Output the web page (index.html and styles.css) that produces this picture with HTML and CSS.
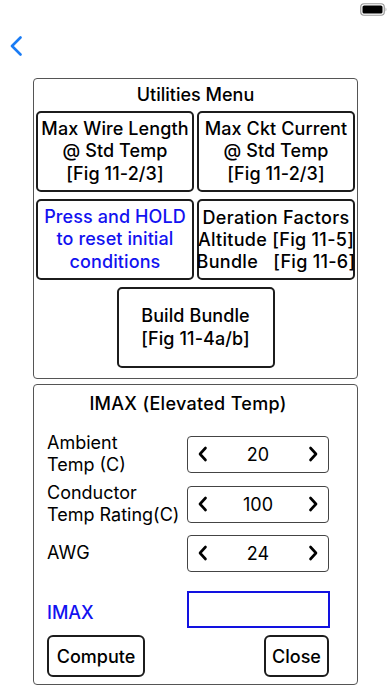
FILE: index.html
```html
<!DOCTYPE html>
<html>
<head>
<meta charset="utf-8">
<link rel="stylesheet" href="styles.css">
</head>
<body>
<div class="status">
  <svg class="battery" width="27" height="13" viewBox="0 0 27 13">
    <rect x="0.75" y="0.75" width="23.5" height="11.5" rx="3.2" fill="none" stroke="#999" stroke-width="1.2"/>
    <rect x="2.5" y="2.5" width="20" height="8" rx="1.6" fill="#000"/>
    <path d="M25.6 4.6 C26.6 5 26.6 8 25.6 8.4 Z" fill="#999"/>
  </svg>
</div>
<div class="nav">
  <svg class="back" width="14" height="20" viewBox="0 0 14 20">
    <path d="M11.5 1.5 L3 10 L11.5 18.5" fill="none" stroke="#1a7cf5" stroke-width="2.6" stroke-linecap="round" stroke-linejoin="round"/>
  </svg>
</div>

<section class="panel menu">
  <h2 class="panel-title">Utilities Menu</h2>
  <div class="menu-grid">
    <div class="btn">Max Wire Length<br>@ Std Temp<br>[Fig 11-2/3]</div>
    <div class="btn">Max Ckt Current<br>@ Std Temp<br>[Fig 11-2/3]</div>
    <div class="btn blue">Press and HOLD<br>to reset initial<br>conditions</div>
    <div class="btn pre">Deration Factors
Altitude [Fig 11-5]
Bundle   [Fig 11-6]</div>
    <div class="btn bundle">Build Bundle<br>[Fig 11-4a/b]</div>
  </div>
</section>

<section class="panel imax">
  <h2 class="panel-title">IMAX (Elevated Temp)</h2>
  <div class="row r1">
    <div class="label">Ambient<br>Temp (C)</div>
    <div class="stepper">
      <svg class="chev" width="10" height="16" viewBox="0 0 10 16"><path d="M7.5 2 L2 8 L7.5 14" fill="none" stroke="#000" stroke-width="2.6" stroke-linecap="round" stroke-linejoin="round"/></svg>
      <span class="val">20</span>
      <svg class="chev" width="10" height="16" viewBox="0 0 10 16"><path d="M2.5 2 L8 8 L2.5 14" fill="none" stroke="#000" stroke-width="2.6" stroke-linecap="round" stroke-linejoin="round"/></svg>
    </div>
  </div>
  <div class="row r2">
    <div class="label">Conductor<br>Temp Rating(C)</div>
    <div class="stepper">
      <svg class="chev" width="10" height="16" viewBox="0 0 10 16"><path d="M7.5 2 L2 8 L7.5 14" fill="none" stroke="#000" stroke-width="2.6" stroke-linecap="round" stroke-linejoin="round"/></svg>
      <span class="val">100</span>
      <svg class="chev" width="10" height="16" viewBox="0 0 10 16"><path d="M2.5 2 L8 8 L2.5 14" fill="none" stroke="#000" stroke-width="2.6" stroke-linecap="round" stroke-linejoin="round"/></svg>
    </div>
  </div>
  <div class="row r3">
    <div class="label">AWG</div>
    <div class="stepper">
      <svg class="chev" width="10" height="16" viewBox="0 0 10 16"><path d="M7.5 2 L2 8 L7.5 14" fill="none" stroke="#000" stroke-width="2.6" stroke-linecap="round" stroke-linejoin="round"/></svg>
      <span class="val">24</span>
      <svg class="chev" width="10" height="16" viewBox="0 0 10 16"><path d="M2.5 2 L8 8 L2.5 14" fill="none" stroke="#000" stroke-width="2.6" stroke-linecap="round" stroke-linejoin="round"/></svg>
    </div>
  </div>
  <div class="row r4">
    <div class="label blue-label">IMAX</div>
    <div class="result"></div>
  </div>
  <div class="actions">
    <div class="act compute">Compute</div>
    <div class="act close">Close</div>
  </div>
</section>
</body>
</html>
```
FILE: styles.css
```css
* { box-sizing: border-box; }
html, body { margin: 0; padding: 0; background: #fff; }
body {
  width: 392px;
  height: 696px;
  font-family: Inter, "Liberation Sans", sans-serif;
  color: #000;
  overflow: hidden;
}
.status {
  height: 28px;
  display: flex;
  justify-content: flex-end;
  padding: 3px 5px 0 0;
}
.battery { display: block; }
.nav {
  height: 50px;
  padding: 8px 0 0 9px;
}
.back { display: block; }

.panel {
  margin-left: 33px;
  width: 325px;
  border: 1px solid #555;
  border-radius: 4px;
}
.panel-title {
  margin: 0;
  font-size: 18px;
  font-weight: 500;
  line-height: 22px;
  text-align: center;
}
.menu { height: 301px; padding: 5px 2px 0 2px; }
.menu .panel-title { margin-bottom: 5px; }
.menu-grid {
  display: grid;
  grid-template-columns: 158px 158px;
  grid-auto-rows: 81px;
  gap: 7px 3px;
  justify-content: center;
}
.btn {
  border: 2px solid #1c1c1c;
  border-radius: 5px;
  display: flex;
  align-items: center;
  justify-content: center;
  text-align: center;
  font-size: 18px;
  font-weight: 500;
  line-height: 22.5px;
  letter-spacing: 0.1px;
}
.btn.blue { color: #1212f0; }
.btn.pre { white-space: pre; line-height: 22px; letter-spacing: 0.3px; }
.btn.bundle { grid-column: 1 / span 2; width: 158px; justify-self: center; }

.imax {
  margin-top: 5px;
  height: 301px;
  padding: 8px 28px 7px 13px;
}
.imax .panel-title { margin-bottom: 17px; letter-spacing: 0.3px; }
.row {
  display: flex;
  align-items: center;
  justify-content: space-between;
  height: 44px;
}
.r2 { margin-top: 6px; }
.r3 { margin-top: 5px; }
.r4 { margin-top: 16px; height: 37px; }
.label {
  font-size: 18px;
  line-height: 22px;
  font-weight: 400;
  letter-spacing: 0px;
}
.blue-label { color: #1212f0; font-weight: 500; padding-top: 6px; }
.stepper {
  width: 142px;
  height: 37px;
  border: 1px solid #444;
  border-radius: 4px;
  display: flex;
  align-items: center;
  justify-content: space-between;
  padding: 0 10px 0 10px;
}
.chev { display: block; }
.val { font-size: 18px; font-weight: 400; }
.result {
  width: 143px;
  height: 37px;
  border: 2px solid #1212e0;
  margin-right: -1px;
}
.actions {
  margin-top: 7px;
  display: flex;
  justify-content: space-between;
}
.act {
  height: 42px;
  border: 2px solid #1c1c1c;
  border-radius: 6px;
  display: flex;
  align-items: center;
  justify-content: center;
  font-size: 18px;
  font-weight: 500;
}
.compute { width: 98px; }
.close { width: 65px; }
```
